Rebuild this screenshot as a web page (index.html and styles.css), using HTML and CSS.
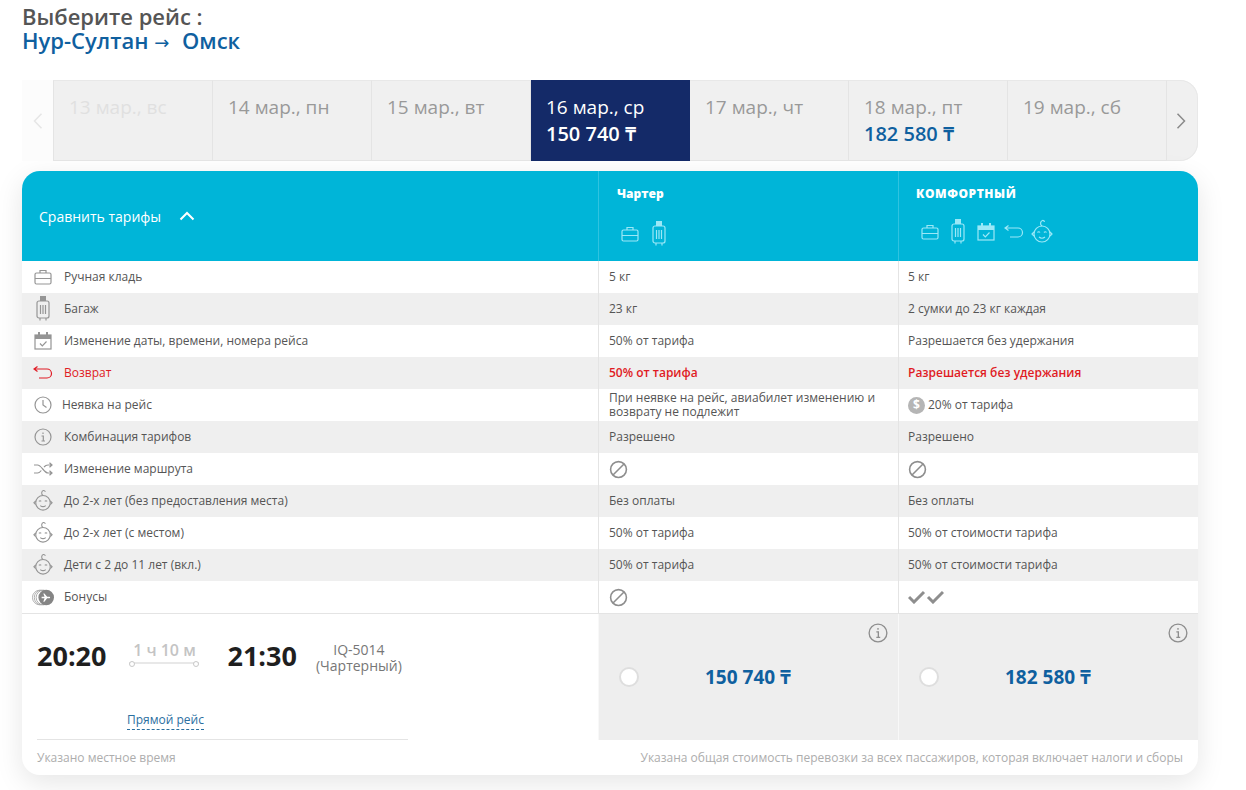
FILE: index.html
```html
<!DOCTYPE html>
<html lang="ru">
<head>
<meta charset="utf-8">
<title>Выберите рейс</title>
<link rel="stylesheet" href="styles.css">
</head>
<body>
<svg class="defs" width="0" height="0" aria-hidden="true">
  <symbol id="i-case" viewBox="0 0 18 16"><rect x="1" y="4" width="16" height="11" rx="1.5"/><path d="M6 4V1.500h6V4M1 9.500h16"/></symbol>
  <symbol id="i-bag" viewBox="0 0 16 26"><path class="solid" d="M5 0h6v5H5z"/><rect x="2" y="5" width="12" height="17" rx="2"/><path d="M5.500 9v9M8 9v9M10.500 9v9M5 22v2.500M11 22v2.500"/></symbol>
  <symbol id="i-cal" viewBox="0 0 18 18"><path class="solid" d="M1 3h16v4H1zM4 0h2v3H4zM12 0h2v3h-2z"/><rect x="1" y="3" width="16" height="14"/><path d="M6 11.500l2.300 2.300L12.500 9.500"/></symbol>
  <symbol id="i-ret" viewBox="0 0 20 14"><path d="M1 3h13a4.500 4.500 0 0 1 0 9H6M4.500 .5L1 3l3.500 2.500"/></symbol>
  <symbol id="i-baby" viewBox="0 0 22 26"><circle cx="11" cy="15" r="8"/><path d="M3 13l-2 2 2 2M19 13l2 2-2 2M11 7c-2.500-1.500-1.500-5 .5-5.500 1-.2 2 .5 1.800 1.500M6.500 13.500q1.300-1.500 2.500 0M13 13.500q1.300-1.500 2.500 0M8 18q3 2.500 6 0"/></symbol>
  <symbol id="i-clock" viewBox="0 0 18 18"><circle cx="9" cy="9" r="8"/><path d="M9 4v5l3.500 2.500"/></symbol>
  <symbol id="i-info" viewBox="0 0 18 18"><circle cx="9" cy="9" r="8"/><path d="M7.500 8H9.300v5M7.500 13h3.500M9 4.500v1.500"/></symbol>
  <symbol id="i-mix" viewBox="0 0 20 14"><path d="M1 3h3.500c4 0 6.500 8 10.500 8h3.500M1 11h3.500c1.500 0 2.800-1.200 3.800-2.500M11 5c1-1.100 2.500-2 4-2h3.500M16.500 .8L19 3l-2.500 2.200M16.500 8.800L19 11l-2.500 2.200"/></symbol>
  <symbol id="i-ban" viewBox="0 0 18 18"><circle cx="9" cy="9" r="7.500"/><path d="M3.800 14.200L14.200 3.800"/></symbol>
  <symbol id="i-up" viewBox="0 0 16 10"><path d="M1.500 8.500L8 2l6.500 6.500"/></symbol>
</svg>

<main class="page">
  <header class="title">
    <h1 class="title-main">Выберите рейс :</h1>
    <div class="title-route">Нур-Султан <span class="route-arrow">→</span> Омск</div>
  </header>

  <nav class="dates">
    <div class="date-arrow date-arrow-left"><svg class="chev" viewBox="0 0 10 16"><path d="M8.500 .8L1.500 8l7 7.200"/></svg></div>
    <div class="date date-faded"><div class="date-day">13 мар., вс</div></div>
    <div class="date"><div class="date-day">14 мар., пн</div></div>
    <div class="date"><div class="date-day">15 мар., вт</div></div>
    <div class="date date-active"><div class="date-day">16 мар., ср</div><div class="date-price">150 740 ₸</div></div>
    <div class="date"><div class="date-day">17 мар., чт</div></div>
    <div class="date"><div class="date-day">18 мар., пт</div><div class="date-price">182 580 ₸</div></div>
    <div class="date"><div class="date-day">19 мар., сб</div></div>
    <div class="date-arrow date-arrow-right"><svg class="chev" viewBox="0 0 10 16"><path d="M1.500 .8l7 7.200-7 7.200"/></svg></div>
  </nav>

  <section class="card">
    <div class="head">
      <div class="head-compare">Сравнить тарифы <svg class="head-chevron"><use href="#i-up"/></svg></div>
      <div class="head-fare">
        <div class="fare-name">Чартер</div>
        <div class="fare-icons fare-icons-a">
          <svg class="ic ic-case"><use href="#i-case"/></svg>
          <svg class="ic ic-bag"><use href="#i-bag"/></svg>
        </div>
      </div>
      <div class="head-fare head-fare-b">
        <div class="fare-name fare-name-upper">КОМФОРТНЫЙ</div>
        <div class="fare-icons fare-icons-b">
          <svg class="ic ic-case"><use href="#i-case"/></svg>
          <svg class="ic ic-bag"><use href="#i-bag"/></svg>
          <svg class="ic ic-cal"><use href="#i-cal"/></svg>
          <svg class="ic ic-ret"><use href="#i-ret"/></svg>
          <svg class="ic ic-baby"><use href="#i-baby"/></svg>
        </div>
      </div>
    </div>

    <div class="row">
      <div class="cell-label"><span class="slot"><svg class="ic ic-case"><use href="#i-case"/></svg></span>Ручная кладь</div>
      <div class="cell">5 кг</div><div class="cell">5 кг</div>
    </div>
    <div class="row">
      <div class="cell-label"><span class="slot"><svg class="ic ic-bag"><use href="#i-bag"/></svg></span>Багаж</div>
      <div class="cell">23 кг</div><div class="cell">2 сумки до 23 кг каждая</div>
    </div>
    <div class="row">
      <div class="cell-label"><span class="slot"><svg class="ic ic-cal"><use href="#i-cal"/></svg></span>Изменение даты, времени, номера рейса</div>
      <div class="cell">50% от тарифа</div><div class="cell">Разрешается без удержания</div>
    </div>
    <div class="row row-red">
      <div class="cell-label"><span class="slot"><svg class="ic ic-ret"><use href="#i-ret"/></svg></span>Возврат</div>
      <div class="cell">50% от тарифа</div><div class="cell">Разрешается без удержания</div>
    </div>
    <div class="row">
      <div class="cell-label cell-label-tight"><span class="slot"><svg class="ic ic-clock"><use href="#i-clock"/></svg></span>Неявка на рейс</div>
      <div class="cell cell-wrap">При неявке на рейс, авиабилет изменению и возврату не подлежит</div>
      <div class="cell"><span class="dollar">$</span>20% от тарифа</div>
    </div>
    <div class="row">
      <div class="cell-label"><span class="slot"><svg class="ic ic-clock"><use href="#i-info"/></svg></span>Комбинация тарифов</div>
      <div class="cell">Разрешено</div><div class="cell">Разрешено</div>
    </div>
    <div class="row">
      <div class="cell-label"><span class="slot"><svg class="ic ic-mix"><use href="#i-mix"/></svg></span>Изменение маршрута</div>
      <div class="cell"><svg class="ic ic-ban"><use href="#i-ban"/></svg></div><div class="cell"><svg class="ic ic-ban"><use href="#i-ban"/></svg></div>
    </div>
    <div class="row">
      <div class="cell-label"><span class="slot"><svg class="ic ic-baby"><use href="#i-baby"/></svg></span>До 2-х лет (без предоставления места)</div>
      <div class="cell">Без оплаты</div><div class="cell">Без оплаты</div>
    </div>
    <div class="row">
      <div class="cell-label"><span class="slot"><svg class="ic ic-baby"><use href="#i-baby"/></svg></span>До 2-х лет (с местом)</div>
      <div class="cell">50% от тарифа</div><div class="cell">50% от стоимости тарифа</div>
    </div>
    <div class="row">
      <div class="cell-label"><span class="slot"><svg class="ic ic-baby"><use href="#i-baby"/></svg></span>Дети с 2 до 11 лет (вкл.)</div>
      <div class="cell">50% от тарифа</div><div class="cell">50% от стоимости тарифа</div>
    </div>
    <div class="row row-last">
      <div class="cell-label"><span class="slot">
        <svg class="bonus" viewBox="0 0 24 18"><circle class="bonus-arc" cx="8.500" cy="9" r="8"/><circle class="bonus-arc" cx="10.500" cy="9" r="8"/><circle class="bonus-arc" cx="12.500" cy="9" r="8"/><circle class="bonus-disc" cx="15.500" cy="9" r="8.500"/><path class="bonus-plane" d="M10.500 8.200h3.200l-1.400-3.700h1.200l3 3.700h2.500a.8.800 0 0 1 0 1.600H16.500l-3 3.700h-1.200l1.400-3.700h-3.200z"/></svg>
      </span>Бонусы</div>
      <div class="cell"><svg class="ic ic-ban"><use href="#i-ban"/></svg></div>
      <div class="cell"><svg class="checks" viewBox="0 0 36 14"><path d="M1 7l5 5L16 2M20 7l5 5L35 2"/></svg></div>
    </div>

    <div class="flight">
      <div class="flight-info">
        <div class="flight-main">
          <div class="flight-time">20:20</div>
          <div class="flight-dur">
            <div class="dur-text">1 ч 10 м</div>
            <div class="dur-line"></div>
          </div>
          <div class="flight-time">21:30</div>
          <div class="flight-no">IQ-5014<br>(Чартерный)</div>
        </div>
        <div class="flight-direct"><span class="direct-link">Прямой рейс</span></div>
      </div>
      <label class="price-box">
        <svg class="ic price-info"><use href="#i-info"/></svg>
        <span class="radio"></span>
        <span class="price">150 740 ₸</span>
      </label>
      <label class="price-box">
        <svg class="ic price-info"><use href="#i-info"/></svg>
        <span class="radio"></span>
        <span class="price">182 580 ₸</span>
      </label>
    </div>

    <div class="notes">
      <span>Указано местное время</span>
      <span>Указана общая стоимость перевозки за всех пассажиров, которая включает налоги и сборы</span>
    </div>
  </section>
</main>
</body>
</html>
```
FILE: styles.css
```css
* { box-sizing: border-box; }
html, body { margin: 0; padding: 0; background: #fff; }
body { font-family: "Open Sans", "Noto Sans", "DejaVu Sans", sans-serif; color: #555; overflow: hidden; }
.defs { position: absolute; }

.page { width: 1246px; height: 790px; padding: 4px 48px 0 22px; }

.title { height: 76px; font-size: 22px; line-height: 24px; font-weight: 600; }
.title-main { margin: 0; font: inherit; color: #555; }
.title-route { color: #0f609f; }
.route-arrow { font-size: 18px; font-weight: 400; margin-right: 7px; }

.dates { display: flex; height: 81px; border-radius: 0 18px 18px 0; overflow: hidden; box-shadow: inset 0 0 0 1px #e8e8e8; background: #f0f0f0; }
.date-arrow { display: flex; align-items: center; justify-content: center; }
.date-arrow-left { flex: 0 0 31px; background: #fcfcfc; color: #e6e6e6; }
.date-arrow-right { flex: 0 0 31px; padding-right: 4px; color: #8a8a8a; }
.chev { width: 10px; height: 16px; fill: none; stroke: currentColor; stroke-width: 1.500; }
.date { flex: 0 0 159px; padding: 13px 0 0 15px; border-right: 1px solid #e4e4e4; background: #f0f0f0; border-bottom: 1px solid #e4e4e4; border-top: 1px solid #e8e8e8; }
.date:nth-child(2) { flex-basis: 160px; border-left: 1px solid #e4e4e4; }
.date-day { font-size: 19px; line-height: 26px; color: #999; }
.date-price { font-size: 20px; line-height: 27px; font-weight: 600; color: #0f609f; }
.date-faded .date-day { color: #e0e0e0; }
.date-active { background: #142a68; border: 0; padding-top: 14px; }
.date-active .date-day, .date-active .date-price { color: #fff; }

.card { height: 604px; margin-top: 10px; border-radius: 18px; background: #fff; box-shadow: 0 8px 28px rgba(0, 0, 0, .1); overflow: hidden; }

.head, .row, .flight { display: grid; grid-template-columns: 576px 300px 300px; }
.head { height: 90px; background: #00b5d8; color: #fff; }
.head-compare { display: flex; align-items: center; padding-left: 17px; font-size: 14px; gap: 18px; }
.head-chevron { width: 16px; height: 10px; fill: none; stroke: #fff; stroke-width: 2; }
.head-fare { border-left: 1px solid #2fc3e0; padding: 14px 0 0 18px; }
.head-fare-b { padding-left: 17px; }
.fare-name { font-size: 12px; line-height: 18px; font-weight: 800; }
.fare-name-upper { letter-spacing: .55px; }
.fare-icons { display: flex; align-items: center; gap: 11px; margin-top: 15px; color: #9be8f7; height: 28px; }
.fare-icons-a { margin-top: 17px; margin-left: 4px; gap: 12px; }
.fare-icons-b { margin-left: 5px; }
.fare-icons-b .ic-ret { margin-left: -2px; }
.fare-icons-b .ic-baby { margin-left: -4px; }

.ic { display: block; fill: none; stroke: currentColor; stroke-width: 1.2; flex: none; }
.ic-case { width: 18px; height: 16px; }
.ic-bag { width: 16px; height: 26px; }
.ic-cal { width: 18px; height: 18px; }
.ic-ret { width: 20px; height: 14px; }
.ic-baby { width: 22px; height: 26px; }
.ic-clock { width: 18px; height: 18px; }
.ic-mix { width: 20px; height: 14px; }
.ic-ban { width: 19px; height: 19px; stroke-width: 1.500; color: #8e8e8e; }
.solid { fill: currentColor; stroke: none; }

.row { height: 32px; font-size: 12px; line-height: 14px; color: #555; }
.row:nth-of-type(odd) { background: #efefef; }
.row-last { height: 33px; border-bottom: 1px solid #e4e4e4; }
.row-red { color: #e01b24; }
.row-red .cell { font-weight: 600; }
.cell-label { display: flex; align-items: center; padding-left: 11px; }
.cell-label .ic { color: #959595; }
.cell-label .ic-baby { width: 20px; height: 24px; }
.row-red .cell-label .ic { color: #e01b24; }
.cell-label-tight .slot { margin-right: 9px; }
.slot { display: flex; align-items: center; justify-content: center; flex: 0 0 20px; min-width: 0; height: 26px; margin-right: 11px; }
.cell { display: flex; align-items: center; border-left: 1px solid #e4e4e4; padding-left: 10px; }
.cell:nth-child(3) { padding-left: 9px; }
.cell-wrap { padding-right: 20px; line-height: 14px; }
.dollar { display: inline-flex; align-items: center; justify-content: center; width: 17px; height: 17px; margin-right: 3px; border-radius: 50%; background: #b5b5b5; color: #fff; font-size: 12px; font-weight: 700; }
.bonus { width: 22px; height: 17px; flex: none; }
.bonus-arc { fill: none; stroke: #a8a8a8; stroke-width: 1; }
.bonus-disc { fill: #858585; }
.bonus-plane { fill: #fff; }
.checks { width: 36px; height: 14px; fill: none; stroke: #8e8e8e; stroke-width: 3; }

.flight { height: 126px; }
.flight-info { display: flex; flex-direction: column; margin-left: 15px; width: 371px; border-bottom: 1px solid #e4e4e4; }
.flight-main { display: flex; align-items: center; height: 59px; padding-top: 24px; }
.flight-time { font-size: 27px; font-weight: 700; color: #1f1f1f; line-height: 36px; }
.flight-dur { width: 70px; margin: 0 28px 6px 23px; text-align: center; }
.dur-text { font-size: 16px; line-height: 20px; color: #c4c4c4; font-weight: 600; }
.dur-line { display: flex; justify-content: space-between; height: 4px; margin-top: 1px; background: linear-gradient(#e8e8e8, #e8e8e8) center / 100% 2px no-repeat; }
.dur-line::before, .dur-line::after { content: ""; width: 4px; height: 4px; border-radius: 50%; background: #fff; border: 1px solid #c8c8c8; }
.flight-no { width: 90px; margin: 4px 0 0 17px; text-align: center; font-size: 14px; line-height: 16px; color: #777; }
.flight-direct { margin-top: 38px; padding-left: 90px; font-size: 12px; line-height: 18px; }
.direct-link { color: #2b6f9f; border-bottom: 1px dashed #2b6f9f; display: inline-block; }
.price-box { position: relative; display: flex; align-items: center; background: #eee; border-left: 1px solid #f8f8f8; padding-left: 20px; }
.price-info { position: absolute; top: 9px; right: 10px; width: 20px; height: 20px; color: #8e8e8e; }
.radio { width: 20px; height: 20px; border-radius: 50%; background: #fff; border: 2px solid #dedede; }
.price { margin-left: 66px; font-size: 19px; font-weight: 700; color: #0f609f; }

.notes { display: flex; justify-content: space-between; padding: 9px 15px 0; font-size: 12px; line-height: 18px; color: #adadad; }
```
